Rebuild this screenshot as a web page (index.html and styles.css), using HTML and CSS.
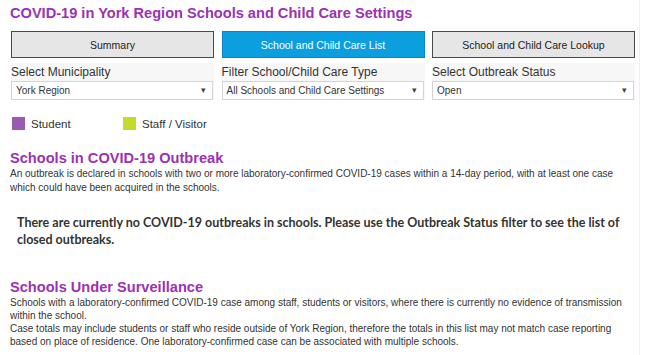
FILE: index.html
```html
<!DOCTYPE html>
<html lang="en">
<head>
    <meta charset="UTF-8">
    <meta name="viewport" content="width=device-width, initial-scale=1.0">
    <title>COVID-19 in York Region Schools and Child Care Settings</title>
    <link rel="stylesheet" href="styles.css">
</head>
<body>
    <div class="dashboard">
        <h1 class="title">COVID-19 in York Region Schools and Child Care Settings</h1>

        <div class="tabs">
            <button class="tab">Summary</button>
            <button class="tab active">School and Child Care List</button>
            <button class="tab">School and Child Care Lookup</button>
        </div>

        <div class="filters">
            <div class="filter">
                <label>Select Municipality</label>
                <div class="select">York Region<span class="arrow">&#9662;</span></div>
            </div>
            <div class="filter">
                <label>Filter School/Child Care Type</label>
                <div class="select">All Schools and Child Care Settings<span class="arrow">&#9662;</span></div>
            </div>
            <div class="filter">
                <label>Select Outbreak Status</label>
                <div class="select">Open<span class="arrow">&#9662;</span></div>
            </div>
        </div>

        <div class="legend">
            <div class="legend-item"><span class="swatch student"></span>Student</div>
            <div class="legend-item"><span class="swatch staff"></span>Staff / Visitor</div>
        </div>

        <section class="section">
            <h2>Schools in COVID-19 Outbreak</h2>
            <p>An outbreak is declared in schools with two or more laboratory-confirmed COVID-19 cases within a 14-day period, with at least one case which could have been acquired in the schools.</p>
            <div class="notice">There are currently no COVID-19 outbreaks in schools. Please use the Outbreak Status filter to see the list of closed outbreaks.</div>
        </section>

        <section class="section">
            <h2>Schools Under Surveillance</h2>
            <p>Schools with a laboratory-confirmed COVID-19 case among staff, students or visitors, where there is currently no evidence of transmission within the school.</p>
            <p>Case totals may include students or staff who reside outside of York Region, therefore the totals in this list may not match case reporting based on place of residence. One laboratory-confirmed case can be associated with multiple schools.</p>
        </section>
    </div>
</body>
</html>
```

FILE: styles.css
```css
body {
    font-family: "Liberation Sans", Arial, sans-serif;
    margin: 0;
    padding: 0;
    background-color: #ffffff;
    color: #333;
}

.dashboard {
    width: 629px;
    padding: 0 0 0 10px;
    border-right: 1px solid #f0f0f0;
    height: 355px;
    overflow: hidden;
}

.title {
    margin: 0;
    padding-top: 5px;
    height: 26px;
    font-size: 14.6px;
    font-weight: bold;
    color: #9b32b4;
}

.tabs {
    display: flex;
    gap: 7.5px;
    padding-left: 1px;
}

.tab {
    width: 203px;
    height: 27px;
    border: 1px solid #4a4a4a;
    background-color: #e6e6e6;
    color: #222;
    font-family: "Liberation Sans", Arial, sans-serif;
    font-size: 10.5px;
    padding: 0;
}

.tab.active {
    background-color: #0b9fe0;
    border-color: #0a86c4;
    color: white;
}

.filters {
    display: flex;
    gap: 7.5px;
    padding-left: 1px;
    margin-top: 5px;
}

.filter {
    width: 203px;
    background-color: #f7f7f7;
}

.filter label {
    display: block;
    font-size: 12px;
    color: #333;
    height: 16px;
    padding-top: 2px;
}

.select {
    position: relative;
    height: 17px;
    line-height: 17px;
    border: 1px solid #d4d4d4;
    background: white;
    font-size: 10px;
    padding-left: 4px;
    margin-right: 1px;
}

.arrow {
    position: absolute;
    right: 6px;
    top: 0;
    font-size: 9px;
    color: #444;
}

.legend {
    display: flex;
    margin-top: 17px;
    padding-left: 2px;
}

.legend-item {
    display: flex;
    align-items: center;
    gap: 6px;
    font-size: 11.5px;
    width: 111px;
    color: #333;
}

.swatch {
    width: 13px;
    height: 13px;
}

.swatch.student {
    background-color: #9b59b6;
}

.swatch.staff {
    background-color: #c6da2b;
}

.section h2 {
    margin: 0;
    font-size: 14.6px;
    line-height: 17px;
    color: #9b32b4;
}

.section p {
    margin: 0;
    font-size: 10px;
    line-height: 13px;
    color: #333;
}

.section:nth-of-type(1) {
    margin-top: 20px;
}

.section:nth-of-type(1) p {
    line-height: 14px;
}

.section:nth-of-type(2) {
    margin-top: 31px;
}

.notice {
    margin-top: 19px;
    padding-left: 7px;
    font-family: Lato, sans-serif;
    font-weight: bold;
    font-size: 12.5px;
    line-height: 17px;
    color: #333;
}
```
